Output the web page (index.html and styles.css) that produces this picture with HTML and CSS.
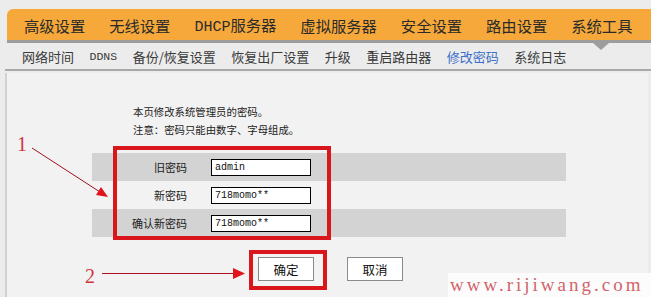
FILE: index.html
```html
<!DOCTYPE html>
<html lang="zh-CN">
<head>
<meta charset="utf-8">
<title>修改密码</title>
<link rel="stylesheet" href="styles.css">
</head>
<body>
<div class="page">
  <nav class="topnav">
    <span>高级设置</span>
    <span>无线设置</span>
    <span><span class="latin">DHCP</span>服务器</span>
    <span>虚拟服务器</span>
    <span>安全设置</span>
    <span>路由设置</span>
    <span>系统工具</span>
  </nav>
  <nav class="subnav">
    <span>网络时间</span>
    <span class="latin">DDNS</span>
    <span>备份/恢复设置</span>
    <span>恢复出厂设置</span>
    <span>升级</span>
    <span>重启路由器</span>
    <span class="active">修改密码</span>
    <span>系统日志</span>
  </nav>
  <main class="content">
    <p class="intro">本页修改系统管理员的密码。</p>
    <p class="intro">注意：密码只能由数字、字母组成。</p>
    <div class="form">
      <div class="row shade"><label>旧密码</label><input class="field" type="text" value="admin"></div>
      <div class="row"><label>新密码</label><input class="field" type="text" value="718momo**"></div>
      <div class="row shade"><label>确认新密码</label><input class="field" type="text" value="718momo**"></div>
    </div>
    <div class="buttons">
      <button class="btn">确定</button>
      <button class="btn">取消</button>
    </div>
  </main>
  <div class="pointer"></div>
  <svg class="annot" width="651" height="297" viewBox="0 0 651 297">
    <rect x="115" y="148" width="214" height="90" fill="none" stroke="#d9161b" stroke-width="4"/>
    <rect x="251" y="252" width="74" height="36" fill="none" stroke="#d9161b" stroke-width="4"/>
    <text x="17" y="151" class="num">1</text>
    <line x1="32" y1="148" x2="100" y2="192" stroke="#a01020" stroke-width="1"/>
    <polygon points="108,197 96,195 101,187" fill="#e0141a"/>
    <text x="85" y="283" class="num">2</text>
    <line x1="102" y1="273.5" x2="236" y2="273.5" stroke="#b01020" stroke-width="1.2"/>
    <polygon points="245,273.5 233,268 233,279" fill="#e0141a"/>
  </svg>
  <div class="watermark">www.rijiwang.com</div>
</div>
</body>
</html>
```
FILE: styles.css
```css
html, body {
  margin: 0;
  padding: 0;
}
body {
  background: #ececec;
  font-family: "Noto Sans CJK SC", "Noto Sans", sans-serif;
  color: #333;
  overflow: hidden;
}
.page {
  position: relative;
  width: 651px;
  height: 297px;
  display: flex;
  flex-direction: column;
}
.topnav {
  margin: 9px 0 0 7px;
  height: 31px;
  background: #f6a93a;
  border-top-left-radius: 6px;
  border-bottom: 3px solid #9d9d9d;
  display: flex;
  align-items: center;
  padding-left: 17px;
  gap: 24px;
  font-size: 15.3px;
  color: #2a2a2a;
  white-space: nowrap;
}
.topnav .latin {
  font-family: "Liberation Mono", monospace;
  font-size: 15px;
}
.subnav {
  margin-left: 5px;
  height: 26px;
  border-bottom: 2px solid #a8a8a8;
  display: flex;
  align-items: center;
  padding-left: 17px;
  gap: 15.5px;
  font-size: 13px;
  color: #3a3a3a;
  white-space: nowrap;
}
.subnav .latin {
  font-family: "Liberation Mono", monospace;
  font-size: 11.5px;
}
.subnav .active {
  color: #3b6fcb;
}
.content {
  flex: 1;
  margin: 2px 3px 0 5px;
  border-left: 2px solid #d2d2d2;
  background: #f2f2f2;
  padding-top: 30px;
}
.intro {
  margin: 0 0 0 126px;
  font-size: 10.4px;
  line-height: 18px;
  color: #222;
}
.form {
  margin: 14px 0 0 85px;
  width: 474px;
}
.row {
  height: 28px;
  display: flex;
  align-items: center;
}
.row.shade {
  background: #d3d3d3;
}
.row label {
  width: 95px;
  text-align: right;
  font-size: 11px;
  color: #222;
}
.field {
  margin-left: 24px;
  width: 100px;
  height: 17px;
  box-sizing: border-box;
  border: 1px solid #000;
  background: #fff;
  padding: 0 3px;
  font-family: "Liberation Mono", monospace;
  font-size: 10px;
  color: #111;
  outline: none;
}
.buttons {
  margin: 20px 0 0 251px;
  display: flex;
  gap: 33px;
}
.btn {
  width: 56px;
  height: 24px;
  background: #fff;
  border: 1px solid #8a8a8a;
  border-radius: 0;
  font-family: "Noto Sans CJK SC", sans-serif;
  font-size: 12.5px;
  color: #111;
  padding: 0;
}
.pointer {
  position: absolute;
  left: 593px;
  top: 43px;
  width: 0;
  height: 0;
  border-left: 8px solid transparent;
  border-right: 8px solid transparent;
  border-top: 7px solid #9d9d9d;
}
.annot {
  position: absolute;
  left: 0;
  top: 0;
  pointer-events: none;
}
.num {
  font-family: "Liberation Serif", serif;
  font-size: 20px;
  fill: #d0343c;
}
.watermark {
  position: absolute;
  left: 448px;
  top: 273px;
  width: 203px;
  height: 24px;
  box-sizing: border-box;
  padding-left: 2px;
  background: #fcfcfc;
  font-family: "Liberation Serif", serif;
  font-size: 19px;
  letter-spacing: 3px;
  line-height: 24px;
  color: #d0646a;
  white-space: nowrap;
}
```
